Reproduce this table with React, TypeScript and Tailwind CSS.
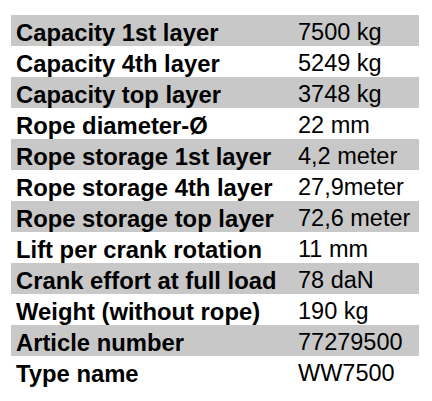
const rows: [string, string][] = [
  ['Capacity 1st layer', '7500 kg'],
  ['Capacity 4th layer', '5249 kg'],
  ['Capacity top layer', '3748 kg'],
  ['Rope diameter-Ø', '22 mm'],
  ['Rope storage 1st layer', '4,2 meter'],
  ['Rope storage 4th layer', '27,9meter'],
  ['Rope storage top layer', '72,6 meter'],
  ['Lift per crank rotation', '11 mm'],
  ['Crank effort at full load', '78 daN'],
  ['Weight (without rope)', '190 kg'],
  ['Article number', '77279500'],
  ['Type name', 'WW7500'],
];

export default function App() {
  return (
    <div className="w-[432px] h-[401px] bg-white pt-[15px] px-[11px] font-['Liberation_Sans',Arial,sans-serif] text-black">
      <div className="w-[408px]">
        {rows.map(([label, value], idx) => (
          <div
            key={idx}
            className={`grid grid-cols-[282px_1fr] h-[31px] pt-[4px] leading-[27px] ${
              idx % 2 === 0 ? 'bg-[#c8c8c8]' : 'bg-white'
            }`}
          >
            <span className="pl-[5px] text-[23.8px] font-bold whitespace-nowrap">{label}</span>
            <span className="pl-[5px] text-[23.5px] whitespace-nowrap">{value}</span>
          </div>
        ))}
      </div>
    </div>
  );
}
